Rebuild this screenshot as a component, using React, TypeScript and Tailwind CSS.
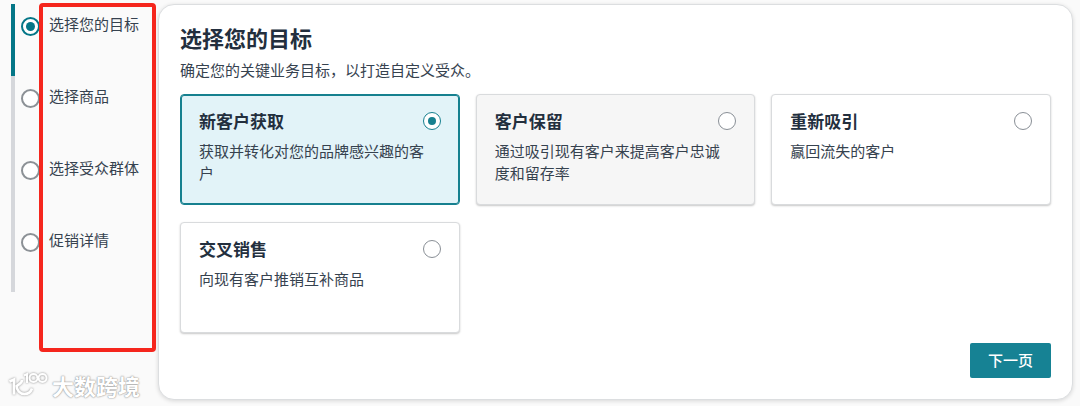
import { useState } from "react"

const steps = ["选择您的目标", "选择商品", "选择受众群体", "促销详情"]

const goals = [
  { title: "新客户获取", text: "获取并转化对您的品牌感兴趣的客户" },
  { title: "客户保留", text: "通过吸引现有客户来提高客户忠诚度和留存率" },
  { title: "重新吸引", text: "赢回流失的客户" },
  { title: "交叉销售", text: "向现有客户推销互补商品" },
]

function Watermark() {
  return (
    <div className="absolute left-2 top-[369px] flex items-center gap-1 text-white">

      <svg
        className="h-8 w-10 [filter:drop-shadow(0_0_1px_#8c8c8c)]"
        viewBox="0 0 40 32"
        fill="none"
        stroke="currentColor"
        strokeWidth="2.6"
        aria-hidden="true"
      >
        <path d="M1.5 12.5l4.5-2v15" />
        <path d="M14 11c0 4-4 4-5.500 6.500" />
        <path d="M8.500 16.500c0 5 3.500 8.500 8 8.500 4 0 6.500-2.500 7.500-5.500" />
        <g strokeWidth="2">
          <path d="M16 6.500l3-1.500v9" />
          <circle cx="25.500" cy="9" r="4" />
          <circle cx="34.500" cy="9" r="4" />
          <path d="M29 7.500l2 3" />
        </g>
      </svg>

      <span className="text-[22px] leading-8 font-bold [text-shadow:0_0_2px_#8c8c8c,0_0_1px_#a0a0a0]">
        大数跨境
      </span>

    </div>
  )
}

function App() {

  const [step, setStep] = useState(0)
  const [goal, setGoal] = useState(0)

  return (
    <div className="relative flex min-h-screen items-start bg-[#fafafa] py-1 pr-[7px] pl-[11px] font-['Noto_Sans_CJK_SC',sans-serif] text-[15px] leading-[22px] text-[#36424f]">

      {/* Steps */}
      <ol className="w-[147px] shrink-0">
        {steps.map((name, index) => (
          <li
            key={name}
            className={`h-[72px] border-l-4 pt-[9px] pl-[6px] ${
              index === step ? "border-[#047687]" : "border-[#d5d7db]"
            }`}
          >
            <label className="flex items-start gap-[9px]">
              <input
                type="radio"
                name="step"
                checked={index === step}
                onChange={() => setStep(index)}
                className="mt-1 grid size-[19px] shrink-0 appearance-none place-items-center rounded-full border-2 border-[#8c9196] bg-white checked:border-[#047687] checked:before:size-[9px] checked:before:rounded-full checked:before:bg-[#047687] checked:before:content-['']"
              />
              <span className="whitespace-nowrap">{name}</span>
            </label>
          </li>
        ))}
      </ol>

      {/* Highlight around the step names */}
      <div className="pointer-events-none absolute top-[3px] left-[39px] h-[349px] w-[117px] rounded-[4px] border-4 border-[#f5261d]" />

      {/* Goal panel */}
      <main className="min-w-0 flex-1 rounded-2xl border border-[#dcdee0] bg-white px-[21px] pt-[18px] pb-[21px] shadow-[0_1px_4px_rgba(0,0,0,0.14)]">

        <h1 className="text-[22px] leading-7 font-bold text-[#232f3e]">
          选择您的目标
        </h1>

        <p className="mt-2">
          确定您的关键业务目标，以打造自定义受众。
        </p>

        <div className="mt-[13px] grid grid-cols-3 gap-x-4 gap-y-[17px]">
          {goals.map((item, index) => (
            <label
              key={item.title}
              className={`block min-h-[111px] rounded-[4px] border px-[18px] pt-[14px] ${
                index === goal
                  ? "border-[#16808f] bg-[#e2f3f8] shadow-[inset_0_0_0_1px_#16808f]"
                  : index === 1
                    ? "border-[#d9dbdd] bg-[#f6f6f6] shadow-[0_1px_2px_rgba(0,0,0,0.22)]"
                    : "border-[#d9dbdd] bg-white shadow-[0_1px_2px_rgba(0,0,0,0.22)]"
              }`}
            >
              <span className="flex items-start justify-between">
                <span className="text-[17px] leading-6 font-bold text-[#232f3e]">
                  {item.title}
                </span>
                <input
                  type="radio"
                  name="goal"
                  checked={index === goal}
                  onChange={() => setGoal(index)}
                  className="mt-[3px] grid size-[18px] shrink-0 appearance-none place-items-center rounded-full border border-[#898f96] bg-white checked:border-[#16808f] checked:before:size-2 checked:before:rounded-full checked:before:bg-[#16808f] checked:before:content-['']"
                />
              </span>
              <span className="mt-[7px] block pr-[10px]">{item.text}</span>
            </label>
          ))}
        </div>

        <div className="mt-[10px] flex justify-end">
          <button
            type="button"
            className="h-[35px] rounded-[2px] bg-[#168294] px-[18px] pb-[2px] font-medium text-white"
          >
            下一页
          </button>
        </div>

      </main>

      <Watermark />

    </div>
  )
}

export default App
